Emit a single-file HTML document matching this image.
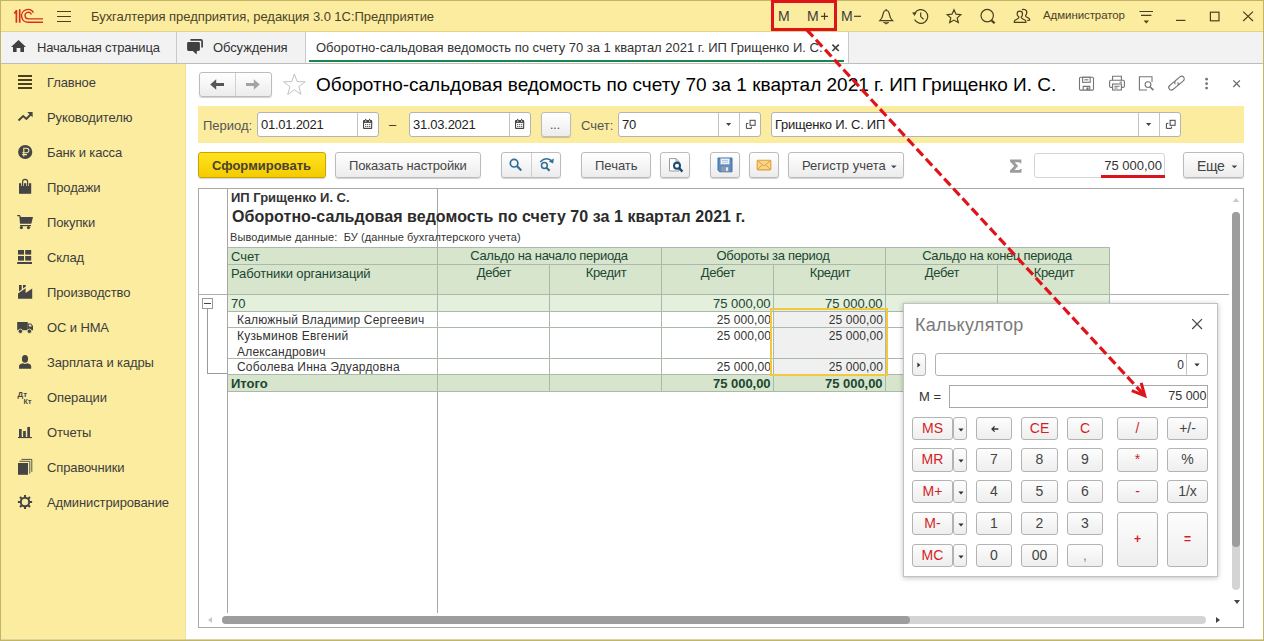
<!DOCTYPE html>
<html lang="ru">
<head>
<meta charset="utf-8">
<title>1C</title>
<style>
html,body{margin:0;padding:0;}
body{width:1264px;height:641px;overflow:hidden;position:relative;background:#fff;font-family:"Liberation Sans",sans-serif;font-size:13px;color:#333;}
.abs{position:absolute;}
.t{position:absolute;white-space:nowrap;line-height:1;}
#titlebar{left:0;top:0;width:1264px;height:32px;background:#fbec9f;}
#tabbar{left:0;top:32px;width:1264px;height:31px;background:#f2f2f2;border-bottom:1px solid #bdbdbd;}
#sidebar{left:0;top:64px;width:185px;height:577px;background:#fbec9f;border-right:1px solid #f0e29c;}
#frame{left:0;top:0;width:1262px;height:639px;border:1px solid #c3b566;pointer-events:none;}
.btn{position:absolute;box-sizing:border-box;border:1px solid #bcbcbc;border-radius:3px;background:linear-gradient(#ffffff,#ececec);box-shadow:0 1px 1px rgba(0,0,0,.18);}
.cb{border-color:#b3b3b3;background:linear-gradient(#fdfdfd,#eeeeee);box-shadow:none;}
.inp{position:absolute;box-sizing:border-box;border:1px solid #b4b4b4;border-radius:3px;background:#fff;}
.menu .t{left:47px;font-size:13px;letter-spacing:-0.12px;color:#3d3d3d;}
</style>
</head>
<body>
<!-- TITLE BAR -->
<div id="titlebar" class="abs"></div>
<div class="t" style="left:91px;top:10px;font-size:13px;letter-spacing:-0.05px;color:#4b4328;">Бухгалтерия предприятия, редакция 3.0 1С:Предприятие</div>

<div class="abs" style="left:0;top:31px;width:1264px;height:1px;background:#e3d386;"></div>
<!-- TAB BAR -->
<div id="tabbar" class="abs"></div>
<div class="abs" style="left:176px;top:32px;width:1px;height:31px;background:#c9c9c9;"></div>
<div class="abs" style="left:305px;top:32px;width:542px;height:31px;background:#fff;border-left:1px solid #c9c9c9;border-right:1px solid #c9c9c9;"></div>
<div class="abs" style="left:309px;top:60px;width:535px;height:2px;background:#19874b;"></div>
<div class="t" style="left:37px;top:41px;font-size:13px;letter-spacing:-0.17px;color:#333;">Начальная страница</div>
<div class="t" style="left:213px;top:41px;font-size:13px;letter-spacing:-0.1px;color:#333;">Обсуждения</div>
<div class="t" style="left:316px;top:41px;font-size:13px;color:#333;">Оборотно-сальдовая ведомость по счету 70 за 1 квартал 2021 г. ИП Грищенко И. С.</div>

<!-- SIDEBAR -->
<div id="sidebar" class="abs"></div>
<div class="menu">
<div class="t" style="top:76px;">Главное</div>
<div class="t" style="top:111px;">Руководителю</div>
<div class="t" style="top:146px;">Банк и касса</div>
<div class="t" style="top:181px;">Продажи</div>
<div class="t" style="top:216px;">Покупки</div>
<div class="t" style="top:251px;">Склад</div>
<div class="t" style="top:286px;">Производство</div>
<div class="t" style="top:321px;">ОС и НМА</div>
<div class="t" style="top:356px;">Зарплата и кадры</div>
<div class="t" style="top:391px;">Операции</div>
<div class="t" style="top:426px;">Отчеты</div>
<div class="t" style="top:461px;">Справочники</div>
<div class="t" style="top:496px;">Администрирование</div>
</div>

<svg class="abs" style="left:0;top:0;" width="186" height="641" viewBox="0 0 186 641">
<!-- logo -->
<g fill="none" stroke="#d8321c" stroke-width="1.4">
<path d="M16.4 10 V22.7 M19.7 9.3 V22.7 M16.6 10.4 L14.3 13.6" stroke-width="1.7"/>
<path d="M33.5 12.6 A6.4 6.4 0 1 0 28.3 22.2 H43"/>
<path d="M31.4 14.4 A3.3 3.3 0 1 0 28.6 18.9 H43"/>
</g>
<!-- hamburger -->
<path d="M57 11.5H71M57 16.5H71M57 21.5H71" stroke="#4a4020" stroke-width="1.1"/>
<!-- home -->
<path d="M18.5 40 L26 47 H24 V52 H20.4 V48 H16.6 V52 H13 V47 H11 Z" fill="#404040"/>
<!-- chat -->
<!-- Glavnoe -->
<g fill="#4a4020"><rect x="18" y="75" width="14" height="2"/><rect x="18" y="79" width="14" height="2"/><rect x="18" y="83" width="14" height="2"/><rect x="18" y="87" width="14" height="2"/></g>
<!-- trend -->
<path d="M18.5 120.5 L23.2 116 L26.4 119 L31 114" fill="none" stroke="#454545" stroke-width="1.9"/>
<path d="M27.2 112 H32.6 V117.2 Z" fill="#454545"/>
<!-- ruble -->
<circle cx="25.2" cy="152" r="7.1" fill="#454545"/>
<path d="M23.8 156.6 V148.2 H26.6 A2.2 2.2 0 0 1 26.6 152.7 H22.3 M22.3 154.6 H27" fill="none" stroke="#fbec9f" stroke-width="1.1"/>
<!-- bag -->
<rect x="19" y="183.2" width="12.2" height="10.6" fill="#454545"/>
<path d="M22.6 186 V181.8 A2.5 2.5 0 0 1 27.6 181.8 V186" fill="none" stroke="#fbec9f" stroke-width="2.6"/>
<path d="M22.6 186 V181.8 A2.5 2.5 0 0 1 27.6 181.8 V186" fill="none" stroke="#454545" stroke-width="1.2"/>
<!-- cart -->
<path d="M17.2 215.6 H19.6 L20.4 217.2" fill="none" stroke="#454545" stroke-width="1.2"/>
<path d="M19.4 217 H33 L31.3 223.8 H20 Z" fill="#454545"/>
<path d="M20 225.6 H31" stroke="#454545" stroke-width="1.2"/>
<circle cx="21.4" cy="227.6" r="1.6" fill="#454545"/><circle cx="28.5" cy="227.6" r="1.6" fill="#454545"/>
<!-- sklad -->
<g fill="#454545"><rect x="18" y="250" width="6" height="4.6"/><rect x="25.2" y="250" width="6" height="4.6"/><rect x="18" y="256" width="6" height="4.6"/><rect x="25.2" y="256" width="6" height="4.6"/><rect x="17.2" y="262" width="14.8" height="2"/></g>
<!-- factory -->
<path d="M18 298.8 V293.6 L25.6 288.2 V293 L32.2 288.6 V298.8 Z" fill="#454545"/>
<path d="M19 285 H21.7 V289.6 L19 291.6 Z M23 285 H25.8 V286.6 L23 288.6 Z" fill="#454545"/>
<!-- truck -->
<path d="M17.2 322 H27.8 V330.2 H17.2 Z" fill="#454545"/>
<path d="M27.8 323.4 H31 L33 326 V330.2 H27.8 Z" fill="#454545"/>
<path d="M28.8 324.4 H30.6 L32 326.4 H28.8 Z" fill="#fbec9f"/>
<circle cx="20.4" cy="331.3" r="2.2" fill="#454545" stroke="#fbec9f" stroke-width="0.8"/><circle cx="29.4" cy="331.3" r="2.2" fill="#454545" stroke="#fbec9f" stroke-width="0.8"/>
<!-- person -->
<ellipse cx="25" cy="358.8" rx="3.1" ry="3.9" fill="#454545"/>
<path d="M19 368.7 V366.5 Q19 364.3 22 363.6 L23 363.2 Q25 364.6 27 363.2 L28 363.6 Q31.2 364.3 31.2 366.5 V368.7 Z" fill="#454545"/>
<!-- dtkt -->
<text x="17.6" y="396.8" font-family="Liberation Sans, sans-serif" font-weight="bold" font-size="7.8" fill="#454545">Дт</text>
<text x="23.6" y="403.8" font-family="Liberation Sans, sans-serif" font-weight="bold" font-size="7.2" fill="#454545">Кт</text>
<!-- reports -->
<g fill="#454545"><rect x="19" y="429" width="2.7" height="8.3"/><rect x="23.1" y="431" width="2.7" height="6.3"/><rect x="27.3" y="427" width="2.7" height="10.3"/><rect x="18" y="437" width="14" height="1.1"/></g>
<!-- books -->
<rect x="18" y="463" width="10" height="11.8" fill="#454545"/>
<path d="M19.5 461.3 H29.8 V473.6 M21.4 459.4 H31.8 V471.8" fill="none" stroke="#454545" stroke-width="0.9"/>
<!-- gear -->
<g transform="translate(25 502)"><circle r="4.2" fill="none" stroke="#454545" stroke-width="2"/>
<g stroke="#454545" stroke-width="2.1"><path d="M0 -4.6V-7.1M0 4.6V7.1M-4.6 0H-7.1M4.6 0H7.1M3.25 3.25L5 5M-3.25 3.25L-5 5M3.25 -3.25L5 -5M-3.25 -3.25L-5 -5"/></g></g>
</svg>
<svg class="abs" style="left:186px;top:32px;" width="30" height="31" viewBox="186 32 30 31">
<path d="M190.4 39.9 H200.8 A1.3 1.3 0 0 1 202.1 41.2 V47.4" fill="none" stroke="#404040" stroke-width="1.7"/>
<path d="M188.5 42.1 H198.5 A1.4 1.4 0 0 1 199.9 43.5 V49.6 A1.4 1.4 0 0 1 198.5 51 H196.9 L196.6 54.5 L192.8 51 H188.5 A1.4 1.4 0 0 1 187.1 49.6 V43.5 A1.4 1.4 0 0 1 188.5 42.1 Z" fill="#404040"/>
</svg>
<!-- titlebar right icons -->
<div class="t" style="left:778px;top:9px;font-size:14px;color:#3d3d3d;">М</div>
<div class="t" style="left:807px;top:9px;font-size:14px;color:#3d3d3d;">М</div>
<div class="t" style="left:841px;top:9px;font-size:14px;color:#3d3d3d;">М</div>
<div class="t" id="adm" style="left:1043px;top:10px;font-size:11.5px;letter-spacing:-0.08px;color:#4b4328;">Администратор</div>
<svg class="abs" style="left:760px;top:0;" width="504" height="32" viewBox="760 0 504 32" fill="none" stroke="#4a4020" stroke-width="1.2">
<path d="M821 16.3H828M824.5 12.8V19.8"/>
<path d="M854 16.3H861"/>
<!-- bell -->
<path d="M879.8 20.6 C881.8 18.8 882.6 17 883 14.4 C883.4 11.6 884.6 10.5 886.2 10.5 C887.8 10.5 889 11.6 889.4 14.4 C889.8 17 890.6 18.8 892.6 20.6 Z M886.2 9.1 V10.5"/>
<path d="M883.4 22.4 H889 L886.2 24.1 Z" fill="#4a4020" stroke-width="0.6"/>
<!-- history -->
<path d="M914.9 13 A6.9 6.9 0 1 1 914.6 19.4"/>
<path d="M912.1 12.6 L916.6 12.2 L914.6 16 Z" fill="#4a4020" stroke="none"/>
<path d="M920.7 12.4 V16.6 L923.6 19.2"/>
<!-- star -->
<path d="M954 9.8 L956 14.2 L960.8 14.7 L957.2 17.9 L958.3 22.6 L954 20.1 L949.7 22.6 L950.8 17.9 L947.2 14.7 L952 14.2 Z"/>
<!-- search -->
<circle cx="987.2" cy="15.6" r="6.2"/>
<path d="M991.4 20.2 L994.6 23.2" stroke-width="2.2"/>
<!-- users -->
<path d="M1019.8 11.2 C1021.6 11.2 1022.5 12.4 1022.5 13.9 C1022.5 15.4 1021.9 16.4 1021.3 17 C1021.1 17.8 1021.5 18.2 1022.4 18.7 L1024.8 20 C1025.8 20.6 1026 21.2 1025.9 22.3 H1014.3 C1014.2 21.2 1014.4 20.6 1015.4 20 L1017.8 18.7 C1018.7 18.2 1019.1 17.8 1018.9 17 C1018.3 16.4 1017.1 15.4 1017.1 13.9 C1017.1 12.4 1018 11.2 1019.8 11.2 Z"/>
<path d="M1022 9.6 C1023 9.2 1024.2 9.2 1025.2 9.8 C1026.6 10.6 1027 12.2 1026.6 13.6 C1026.3 14.6 1025.6 15.2 1025.5 15.8 C1025.5 16.6 1026.2 16.9 1027 17.3 L1028.8 18.2 C1029.6 18.7 1029.8 19.2 1029.7 20.2 L1027.2 20.3"/>
<!-- menu -->
<path d="M1139.4 11.5H1153M1141 15.4H1151.4"/>
<path d="M1143.6 20.6 H1149 L1146.3 23.4 Z" fill="#4a4020" stroke="none"/>
<!-- window -->
<path d="M1176 20.4H1185.4"/>
<rect x="1210.4" y="12.2" width="8.6" height="8.6"/>
<path d="M1243.2 11.6 L1253 21 M1253 11.6 L1243.2 21"/>
</svg>
<!-- tab close -->
<svg class="abs" style="left:830px;top:42px;" width="12" height="12" viewBox="830 42 12 12"><path d="M832.4 44.6 L838.8 51 M838.8 44.6 L832.4 51" stroke="#444" stroke-width="1.7" fill="none"/></svg>
<!-- CONTENT HEADER -->
<div class="btn" style="left:199px;top:72px;width:73px;height:25px;"></div>
<div class="abs" style="left:235px;top:73px;width:1px;height:23px;background:#d0d0d0;"></div>
<div class="t" id="h1" style="left:316px;top:75px;font-size:19px;color:#000;">Оборотно-сальдовая ведомость по счету 70 за 1 квартал 2021 г. ИП Грищенко И. С.</div>

<!-- PERIOD BAND -->
<div class="abs" style="left:198px;top:106px;width:1046px;height:37px;background:#fbec9f;"></div>


<div class="t" style="left:203px;top:119px;font-size:13px;color:#555;">Период:</div>
<div class="inp" style="left:257px;top:112px;width:122px;height:25px;"></div>
<div class="abs" style="left:357px;top:113px;width:1px;height:23px;background:#c4c4c4;"></div>
<div class="t" style="left:261px;top:118px;font-size:13px;letter-spacing:-0.25px;color:#222;">01.01.2021</div>
<div class="t" style="left:389px;top:118px;font-size:13px;color:#333;">–</div>
<div class="inp" style="left:409px;top:112px;width:122px;height:25px;"></div>
<div class="abs" style="left:509px;top:113px;width:1px;height:23px;background:#c4c4c4;"></div>
<div class="t" style="left:413px;top:118px;font-size:13px;letter-spacing:-0.25px;color:#222;">31.03.2021</div>
<div class="btn" style="left:541px;top:112px;width:30px;height:25px;"></div>
<div class="t" style="left:550px;top:119px;font-size:12px;color:#444;">...</div>
<div class="t" style="left:581px;top:119px;font-size:13px;color:#555;">Счет:</div>
<div class="inp" style="left:618px;top:112px;width:143px;height:25px;"></div>
<div class="abs" style="left:718px;top:113px;width:1px;height:23px;background:#c4c4c4;"></div>
<div class="abs" style="left:739px;top:113px;width:1px;height:23px;background:#c4c4c4;"></div>
<div class="t" style="left:622px;top:118px;font-size:13px;letter-spacing:-0.25px;color:#222;">70</div>
<div class="inp" style="left:771px;top:112px;width:410px;height:25px;"></div>
<div class="abs" style="left:1138px;top:113px;width:1px;height:23px;background:#c4c4c4;"></div>
<div class="abs" style="left:1159px;top:113px;width:1px;height:23px;background:#c4c4c4;"></div>
<div class="t" style="left:775px;top:118px;font-size:13px;letter-spacing:-0.25px;color:#222;">Грищенко И. С. ИП</div>

<!-- COMMAND BAR -->
<div class="btn" style="left:198px;top:152px;width:128px;height:26px;border-color:#c9a500;background:linear-gradient(#ffe320,#f5cb00);"></div>
<div class="t" style="left:212px;top:159px;font-size:13px;font-weight:bold;color:#4a4230;">Сформировать</div>
<div class="btn" style="left:335px;top:152px;width:146px;height:26px;"></div>
<div class="t" style="left:349px;top:159px;font-size:13px;letter-spacing:-0.15px;color:#444;">Показать настройки</div>
<div class="btn" style="left:501px;top:152px;width:60px;height:26px;"></div>
<div class="abs" style="left:531px;top:153px;width:1px;height:24px;background:#d0d0d0;"></div>
<div class="btn" style="left:581px;top:152px;width:70px;height:26px;"></div>
<div class="t" style="left:595px;top:159px;font-size:13px;color:#444;">Печать</div>
<div class="btn" style="left:660px;top:152px;width:30px;height:26px;"></div>
<div class="btn" style="left:710px;top:152px;width:30px;height:26px;"></div>
<div class="btn" style="left:749px;top:152px;width:30px;height:26px;"></div>
<div class="btn" style="left:788px;top:152px;width:116px;height:26px;"></div>
<div class="t" style="left:802px;top:159px;font-size:13px;color:#444;">Регистр учета</div>
<div class="inp" style="left:1034px;top:153px;width:131px;height:25px;border-color:#d4d4d4;"></div>
<div class="t" style="left:1062px;width:100px;text-align:right;top:159px;font-size:13px;color:#333;">75 000,00</div>
<div class="abs" style="left:1101px;top:174.5px;width:64px;height:3px;background:#d8141c;"></div>
<div class="btn" style="left:1183px;top:152px;width:61px;height:26px;"></div>
<div class="t" style="left:1197px;top:159px;font-size:14px;letter-spacing:-0.3px;color:#444;">Еще</div>

<svg class="abs" style="left:186px;top:64px;pointer-events:none;" width="1078" height="130" viewBox="186 64 1078 130">
<!-- nav arrows -->
<path d="M210.2 84.5 L216.2 79.2 V83 H224 V86 H216.2 V89.8 Z" fill="#555"/>
<path d="M259.8 84.5 L253.8 79.2 V83 H246 V86 H253.8 V89.8 Z" fill="#a3a3a3"/>
<!-- star -->
<path d="M294.4 74 L297.1 81.6 L305.2 81.8 L298.8 86.7 L301.1 94.4 L294.4 89.8 L287.7 94.4 L290 86.7 L283.6 81.8 L291.7 81.6 Z" fill="#fff" stroke="#c2c2c2" stroke-width="1"/>
<!-- header right icons -->
<g fill="none" stroke="#757575" stroke-width="1.1">
<path d="M1080.6 77.3 H1092.4 A1.1 1.1 0 0 1 1093.5 78.4 V89 A1.1 1.1 0 0 1 1092.4 90.1 H1080.6 A1.1 1.1 0 0 1 1079.5 89 V78.4 A1.1 1.1 0 0 1 1080.6 77.3 Z"/>
<rect x="1082.6" y="77.3" width="7.6" height="5"/><path d="M1084.4 79.8 H1088.4"/>
<path d="M1083.2 90 V86.4 H1089.8 V90"/><rect x="1086.4" y="87.4" width="2.2" height="2.6" fill="#757575" stroke="none"/>
<!-- print -->
<path d="M1112.6 80.2 V76.3 H1121.4 V80.2"/>
<rect x="1109.6" y="80.2" width="14.8" height="7.2" rx="1.4"/>
<rect x="1112.6" y="84" width="8.8" height="6" fill="#fff"/><path d="M1114.4 86.2H1119.6M1114.4 88H1117.6"/>
<path d="M1119.6 82.2H1122"/>
<!-- preview -->
<path d="M1152 82 V76.7 H1139.4 V90 H1147"/>
<circle cx="1148" cy="84.6" r="2.9"/><path d="M1150.2 87 L1153.4 90.2" stroke-width="1.7"/>
<!-- link -->
<g transform="rotate(-40 1176.5 83.2)"><path d="M1176.2 80.6 H1169.8 A2.6 2.6 0 0 0 1169.8 85.8 H1175.4 A2.6 2.6 0 0 0 1178 83.2"/><path d="M1176.8 85.8 H1183.2 A2.6 2.6 0 0 0 1183.2 80.6 H1177.6 A2.6 2.6 0 0 0 1175 83.2"/></g>
</g>
<circle cx="1206.6" cy="79.2" r="1.4" fill="#757575"/><circle cx="1206.6" cy="83.7" r="1.4" fill="#757575"/><circle cx="1206.6" cy="88.1" r="1.4" fill="#757575"/>
<path d="M1233.3 80.4 L1239.9 87 M1239.9 80.4 L1233.3 87" stroke="#666" stroke-width="1.2" fill="none"/>
<!-- period band icons -->
<g class="cal"><rect x="363.0" y="120" width="9.2" height="8.9" rx="1" fill="#444"/><rect x="364.1" y="122.9" width="7" height="4.9" fill="#fff"/><rect x="365.1" y="118.9" width="1.2" height="1.8" fill="#444"/><rect x="369.0" y="118.9" width="1.2" height="1.8" fill="#444"/><rect x="365.1" y="120.6" width="1.2" height="1.1" fill="#fff"/><rect x="369.0" y="120.6" width="1.2" height="1.1" fill="#fff"/><g fill="#444"><circle cx="365.70" cy="124.50" r="0.62"/><circle cx="365.70" cy="126.45" r="0.62"/><circle cx="367.70" cy="124.50" r="0.62"/><circle cx="367.70" cy="126.45" r="0.62"/><circle cx="369.70" cy="124.50" r="0.62"/><circle cx="369.70" cy="126.45" r="0.62"/></g></g><g class="cal"><rect x="515.0" y="120" width="9.2" height="8.9" rx="1" fill="#444"/><rect x="516.1" y="122.9" width="7" height="4.9" fill="#fff"/><rect x="517.1" y="118.9" width="1.2" height="1.8" fill="#444"/><rect x="521.0" y="118.9" width="1.2" height="1.8" fill="#444"/><rect x="517.1" y="120.6" width="1.2" height="1.1" fill="#fff"/><rect x="521.0" y="120.6" width="1.2" height="1.1" fill="#fff"/><g fill="#444"><circle cx="517.70" cy="124.50" r="0.62"/><circle cx="517.70" cy="126.45" r="0.62"/><circle cx="519.70" cy="124.50" r="0.62"/><circle cx="519.70" cy="126.45" r="0.62"/><circle cx="521.70" cy="124.50" r="0.62"/><circle cx="521.70" cy="126.45" r="0.62"/></g></g>
<path d="M726.0 123.0 H731.2 L728.6 126.0 Z" fill="#444"/><path d="M1146.0 123.0 H1151.2 L1148.6 126.0 Z" fill="#444"/>
<g fill="none" stroke="#444" stroke-width="1"><rect x="750.1" y="120.3" width="5" height="5"/><path d="M748.4 123.4 H746.4 V128.4 H751.4 V126.6"/></g><g fill="none" stroke="#444" stroke-width="1"><rect x="1170.1" y="120.3" width="5" height="5"/><path d="M1168.4 123.4 H1166.4 V128.4 H1171.4 V126.6"/></g>
<!-- search icons -->
<g fill="none" stroke="#2f6f98" stroke-width="1.7">
<circle cx="514.1" cy="163.2" r="3.8"/><path d="M516.9 166.1 L521.3 170.6" stroke-width="2.2"/>
<circle cx="544.4" cy="165.5" r="2.9" stroke-width="1.5"/><path d="M546.5 167.7 L549.6 170.8" stroke-width="2"/>
<path d="M540.2 162 Q545.6 156.3 551.6 160.6" stroke-width="1.4"/>
</g>
<path d="M553.8 158.4 L553.2 163.6 L548.8 161.4 Z" fill="#2f6f98"/>
<!-- preview btn -->
<path d="M669.5 158.6 H676 L679 161.6 V171 H669.5 Z" fill="#fff" stroke="#9a9a9a" stroke-width="1"/>
<path d="M676 158.6 V161.6 H679" fill="none" stroke="#9a9a9a" stroke-width="1"/>
<circle cx="677" cy="165.8" r="3" fill="#fff" stroke="#1c4a6e" stroke-width="2"/><path d="M679.3 168.2 L682.4 171.6" stroke="#1c4a6e" stroke-width="2.4"/>
<!-- floppy -->
<path d="M718 158 H732 V171.8 H719.6 L718 170.2 Z" fill="#5d8cc4" stroke="#3f6fa8" stroke-width="1"/>
<rect x="720.6" y="158.6" width="8.8" height="5.6" fill="#f4f7fb" stroke="#9db6d6" stroke-width="0.6"/>
<path d="M722 160.4H728M722 162.2H728" stroke="#9db6d6" stroke-width="0.8"/>
<rect x="721.2" y="166.6" width="7.8" height="5" fill="#8e9aa8"/><rect x="726" y="167.4" width="2" height="3.4" fill="#e8ecf0"/>
<!-- mail -->
<rect x="757.2" y="160.3" width="13.6" height="9.6" rx="0.8" fill="#f7d58e" stroke="#e0a030" stroke-width="1.1"/>
<path d="M757.6 160.8 L764 166 L770.4 160.8 M757.6 169.4 L762.4 164.8 M770.4 169.4 L765.6 164.8" fill="none" stroke="#e0a030" stroke-width="1"/>
<path d="M891.0 165.4 H896.6 L893.8 168.2 Z" fill="#444"/><path d="M1231.6 165.4 H1237.2 L1234.4 168.2 Z" fill="#444"/>
<!-- sigma -->
<path d="M1010 159.4 H1021.3 V163.3 H1019.6 V162.2 H1014.7 L1018.1 166 L1014.5 170.1 H1019.8 V168.9 H1021.5 V172.8 H1010 V170.6 L1014.2 166 L1010 161.6 Z" fill="#9c9c9c"/>
</svg>
<!-- SHEET -->
<div class="abs" id="sheet" style="left:198px;top:188px;width:1044px;height:438px;border:1px solid #a9a9a9;box-sizing:content-box;background:#fff;"></div>
<div class="abs" style="left:228px;top:247px;width:882px;height:47px;background:#d6e5cb;"></div>
<div class="abs" style="left:228px;top:294px;width:882px;height:17px;background:#e4efdc;"></div>
<div class="abs" style="left:228px;top:375px;width:882px;height:16px;background:#d6e5cb;"></div>
<div class="abs" style="left:773px;top:311px;width:113px;height:64px;background:#f1f0f0;"></div>
<div class="abs" style="left:227px;top:189px;width:1px;height:424px;background:#a6a6a6;"></div>
<div class="abs" style="left:437px;top:189px;width:1px;height:424px;background:#a6a6a6;"></div>
<div class="abs" style="left:199px;top:294px;width:1030px;height:1px;background:#b0b0b0;"></div>
<div class="abs" style="left:228px;top:247px;width:882px;height:1px;background:#a9b9ac;"></div>
<div class="abs" style="left:228px;top:264px;width:882px;height:1px;background:#a9b9ac;"></div>
<div class="abs" style="left:228px;top:294px;width:882px;height:1px;background:#a9b9ac;"></div>
<div class="abs" style="left:228px;top:311px;width:882px;height:1px;background:#a9b9ac;"></div>
<div class="abs" style="left:228px;top:327px;width:882px;height:1px;background:#a9b9ac;"></div>
<div class="abs" style="left:228px;top:358px;width:882px;height:1px;background:#a9b9ac;"></div>
<div class="abs" style="left:228px;top:374px;width:882px;height:1px;background:#a9b9ac;"></div>
<div class="abs" style="left:228px;top:391px;width:882px;height:1px;background:#a9b9ac;"></div>
<div class="abs" style="left:661px;top:247px;width:1px;height:144px;background:#a9b9ac;"></div>
<div class="abs" style="left:885px;top:247px;width:1px;height:144px;background:#a9b9ac;"></div>
<div class="abs" style="left:1109px;top:247px;width:1px;height:144px;background:#a9b9ac;"></div>
<div class="abs" style="left:549px;top:264px;width:1px;height:127px;background:#a9b9ac;"></div>
<div class="abs" style="left:773px;top:264px;width:1px;height:127px;background:#a9b9ac;"></div>
<div class="abs" style="left:997px;top:264px;width:1px;height:127px;background:#a9b9ac;"></div>
<div class="abs" style="left:437px;top:247px;width:1px;height:144px;background:#a9b9ac;"></div>
<div class="t" style="left:231px;top:191px;font-size:13px;font-weight:bold;color:#333;">ИП Грищенко И. С.</div>
<div class="t" id="rt" style="left:232px;top:209px;font-size:16px;font-weight:bold;letter-spacing:0.05px;color:#2b2b2b;">Оборотно-сальдовая ведомость по счету 70 за 1 квартал 2021 г.</div>
<div class="t" id="vd" style="left:230px;top:232px;font-size:11px;letter-spacing:0.09px;color:#333;">Выводимые данные:&nbsp; БУ (данные бухгалтерского учета)</div>
<div class="t" style="left:231px;top:250px;font-size:13px;color:#1c4634;">Счет</div>
<div class="t" style="left:231px;top:267px;font-size:13px;letter-spacing:-0.15px;color:#1c4634;">Работники организаций</div>
<div class="t" style="left:437px;width:224px;text-align:center;top:249px;font-size:13px;letter-spacing:-0.3px;color:#1c4634;">Сальдо на начало периода</div>
<div class="t" style="left:661px;width:224px;text-align:center;top:249px;font-size:13px;letter-spacing:-0.3px;color:#1c4634;">Обороты за период</div>
<div class="t" style="left:885px;width:224px;text-align:center;top:249px;font-size:13px;letter-spacing:-0.3px;color:#1c4634;">Сальдо на конец периода</div>
<div class="t" style="left:438px;width:112px;text-align:center;top:266px;font-size:13px;letter-spacing:-0.3px;color:#1c4634;">Дебет</div>
<div class="t" style="left:550px;width:112px;text-align:center;top:266px;font-size:13px;letter-spacing:-0.3px;color:#1c4634;">Кредит</div>
<div class="t" style="left:662px;width:112px;text-align:center;top:266px;font-size:13px;letter-spacing:-0.3px;color:#1c4634;">Дебет</div>
<div class="t" style="left:774px;width:112px;text-align:center;top:266px;font-size:13px;letter-spacing:-0.3px;color:#1c4634;">Кредит</div>
<div class="t" style="left:886px;width:112px;text-align:center;top:266px;font-size:13px;letter-spacing:-0.3px;color:#1c4634;">Дебет</div>
<div class="t" style="left:998px;width:112px;text-align:center;top:266px;font-size:13px;letter-spacing:-0.3px;color:#1c4634;">Кредит</div>
<div class="t" style="left:231px;top:297px;font-size:13px;color:#1c4634;">70</div>
<div class="t" style="left:662px;width:108.5px;text-align:right;top:297px;font-size:13px;letter-spacing:-0.05px;color:#1c4634;">75 000,00</div>
<div class="t" style="left:774px;width:108.5px;text-align:right;top:297px;font-size:13px;letter-spacing:-0.05px;color:#1c4634;">75 000,00</div>
<div class="t" style="left:237px;top:314px;font-size:12px;letter-spacing:0.2px;color:#333;">Калюжный Владимир Сергеевич</div>
<div class="t" style="left:662px;width:109px;text-align:right;top:314px;font-size:12px;letter-spacing:0.1px;color:#333;">25 000,00</div>
<div class="t" style="left:774px;width:109px;text-align:right;top:314px;font-size:12px;letter-spacing:0.1px;color:#333;">25 000,00</div>
<div class="t" style="left:237px;top:330px;font-size:12px;letter-spacing:0.2px;color:#333;">Кузьминов Евгений</div>
<div class="t" style="left:237px;top:346px;font-size:12px;letter-spacing:0.2px;color:#333;">Александрович</div>
<div class="t" style="left:662px;width:109px;text-align:right;top:330px;font-size:12px;letter-spacing:0.1px;color:#333;">25 000,00</div>
<div class="t" style="left:774px;width:109px;text-align:right;top:330px;font-size:12px;letter-spacing:0.1px;color:#333;">25 000,00</div>
<div class="t" style="left:237px;top:361px;font-size:12px;letter-spacing:0.2px;color:#333;">Соболева Инна Эдуардовна</div>
<div class="t" style="left:662px;width:109px;text-align:right;top:361px;font-size:12px;letter-spacing:0.1px;color:#333;">25 000,00</div>
<div class="t" style="left:774px;width:109px;text-align:right;top:361px;font-size:12px;letter-spacing:0.1px;color:#333;">25 000,00</div>
<div class="t" style="left:231px;top:377px;font-size:13px;font-weight:bold;color:#1c4634;">Итого</div>
<div class="t" style="left:662px;width:108.5px;text-align:right;top:377px;font-size:13px;letter-spacing:-0.05px;color:#1c4634;font-weight:bold;">75 000,00</div>
<div class="t" style="left:774px;width:108.5px;text-align:right;top:377px;font-size:13px;letter-spacing:-0.05px;color:#1c4634;font-weight:bold;">75 000,00</div>
<div class="abs" style="left:770.3px;top:308.2px;width:113.5px;height:64.3px;border:2.4px solid #f3c73f;"></div>
<div class="abs" style="left:202px;top:298px;width:9px;height:9px;border:1px solid #9a9a9a;background:#fff;box-sizing:content-box;"></div>
<div class="abs" style="left:204px;top:303px;width:7px;height:1px;background:#444;"></div>
<div class="abs" style="left:207px;top:309px;width:1px;height:65px;background:#9a9a9a;"></div>
<div class="abs" style="left:207px;top:373px;width:20px;height:1px;background:#9a9a9a;"></div>
<div class="abs" style="left:1232px;top:212px;width:8px;height:378px;border-radius:4px;background:#d4d4d4;"></div>
<div class="abs" style="left:1232px;top:212px;width:8px;height:335px;border-radius:4px;background:#9d9d9d;"></div>
<div class="abs" style="left:1233px;top:198px;width:0;height:0;border-left:3px solid transparent;border-right:3px solid transparent;border-bottom:4px solid #c8c8c8;"></div>
<div class="abs" style="left:1233.5px;top:599.5px;width:0;height:0;border-left:3px solid transparent;border-right:3px solid transparent;border-top:4px solid #444;"></div>
<div class="abs" style="left:222px;top:616px;width:984px;height:8px;border-radius:4px;background:#d4d4d4;"></div>
<div class="abs" style="left:222px;top:616px;width:688px;height:8px;border-radius:4px;background:#9d9d9d;"></div>
<div class="abs" style="left:208px;top:617px;width:0;height:0;border-top:3px solid transparent;border-bottom:3px solid transparent;border-right:4px solid #c8c8c8;"></div>
<div class="abs" style="left:1216px;top:617px;width:0;height:0;border-top:3px solid transparent;border-bottom:3px solid transparent;border-left:4px solid #444;"></div>
<div class="abs" id="calc" style="left:903px;top:303px;width:313px;height:272px;border:1px solid #c2c2c2;background:#fff;box-shadow:0 1px 5px rgba(0,0,0,.25);"></div>
<div class="t" id="ct" style="left:915px;top:316px;font-size:18px;letter-spacing:0.3px;color:#7a7a7a;">Калькулятор</div>
<svg class="abs" style="left:1191px;top:318px;" width="12" height="12" viewBox="0 0 12 12"><path d="M1.2 1.2L11 11M11 1.2L1.2 11" stroke="#444" stroke-width="1.2" fill="none"/></svg>
<div class="btn cb" style="left:912px;top:353px;width:14px;height:23px;"></div>
<svg class="abs" style="left:917px;top:362px;" width="4" height="6" viewBox="0 0 4 6"><path d="M0.4 0.4V5.6L3.4 3Z" fill="#333"/></svg>
<div class="inp" style="left:935px;top:353px;width:273px;height:23px;border-color:#b2b2b2;"></div>
<div class="abs" style="left:1186px;top:354px;width:1px;height:21px;background:#c4c4c4;"></div>
<div class="t" style="left:1085px;width:99px;text-align:right;top:359px;font-size:12px;color:#333;">0</div>
<svg class="abs" style="left:1194px;top:363px;" width="6" height="4" viewBox="0 0 6 4"><path d="M0.4 0.4H5.6L3 3.4Z" fill="#333"/></svg>
<div class="t" style="left:919px;top:390px;font-size:13px;color:#333;">М =</div>
<div class="inp" style="left:949px;top:385px;width:259px;height:23px;border-radius:0;border-color:#a8a8a8;"></div>
<div class="t" style="left:1105px;width:101.5px;text-align:right;top:390px;font-size:12.5px;color:#333;">75 000</div>
<div class="btn cb" style="left:912px;top:417px;width:41px;height:23px;"></div>
<div class="btn cb" style="left:952.5px;top:417px;width:14.5px;height:23px;"></div>
<svg class="abs" style="left:957.5px;top:427.5px;" width="6" height="4" viewBox="0 0 6 4"><path d="M0.4 0.4H5.6L3 3.4Z" fill="#333"/></svg>
<div class="t" style="left:912px;width:41px;text-align:center;top:420.5px;font-size:14px;color:#d21f26;">MS</div>
<div class="btn cb" style="left:912px;top:448px;width:41px;height:24px;"></div>
<div class="btn cb" style="left:952.5px;top:448px;width:14.5px;height:24px;"></div>
<svg class="abs" style="left:957.5px;top:459.0px;" width="6" height="4" viewBox="0 0 6 4"><path d="M0.4 0.4H5.6L3 3.4Z" fill="#333"/></svg>
<div class="t" style="left:912px;width:41px;text-align:center;top:452.0px;font-size:14px;color:#d21f26;">MR</div>
<div class="btn cb" style="left:912px;top:480px;width:41px;height:23px;"></div>
<div class="btn cb" style="left:952.5px;top:480px;width:14.5px;height:23px;"></div>
<svg class="abs" style="left:957.5px;top:490.5px;" width="6" height="4" viewBox="0 0 6 4"><path d="M0.4 0.4H5.6L3 3.4Z" fill="#333"/></svg>
<div class="t" style="left:912px;width:41px;text-align:center;top:483.5px;font-size:14px;color:#d21f26;">M+</div>
<div class="btn cb" style="left:912px;top:512px;width:41px;height:23px;"></div>
<div class="btn cb" style="left:952.5px;top:512px;width:14.5px;height:23px;"></div>
<svg class="abs" style="left:957.5px;top:522.5px;" width="6" height="4" viewBox="0 0 6 4"><path d="M0.4 0.4H5.6L3 3.4Z" fill="#333"/></svg>
<div class="t" style="left:912px;width:41px;text-align:center;top:515.5px;font-size:14px;color:#d21f26;">M-</div>
<div class="btn cb" style="left:912px;top:544px;width:41px;height:23px;"></div>
<div class="btn cb" style="left:952.5px;top:544px;width:14.5px;height:23px;"></div>
<svg class="abs" style="left:957.5px;top:554.5px;" width="6" height="4" viewBox="0 0 6 4"><path d="M0.4 0.4H5.6L3 3.4Z" fill="#333"/></svg>
<div class="t" style="left:912px;width:41px;text-align:center;top:547.5px;font-size:14px;color:#d21f26;">MC</div>
<div class="btn cb" style="left:976px;top:417px;width:36px;height:23px;"></div>
<svg class="abs" style="left:991px;top:425px;" width="8" height="8" viewBox="0 0 8 8"><path d="M7.4 4H1.2M3.6 1.4L1 4L3.6 6.6" stroke="#333" stroke-width="1.3" fill="none"/></svg>
<div class="btn cb" style="left:1021px;top:417px;width:37px;height:23px;"></div>
<div class="t" style="left:1021px;width:37px;text-align:center;top:420.5px;font-size:14px;color:#d21f26;">CE</div>
<div class="btn cb" style="left:1067px;top:417px;width:36px;height:23px;"></div>
<div class="t" style="left:1067px;width:36px;text-align:center;top:420.5px;font-size:14px;color:#d21f26;">C</div>
<div class="btn cb" style="left:976px;top:448px;width:36px;height:24px;"></div>
<div class="t" style="left:976px;width:36px;text-align:center;top:452.0px;font-size:14px;color:#444;">7</div>
<div class="btn cb" style="left:1021px;top:448px;width:37px;height:24px;"></div>
<div class="t" style="left:1021px;width:37px;text-align:center;top:452.0px;font-size:14px;color:#444;">8</div>
<div class="btn cb" style="left:1067px;top:448px;width:36px;height:24px;"></div>
<div class="t" style="left:1067px;width:36px;text-align:center;top:452.0px;font-size:14px;color:#444;">9</div>
<div class="btn cb" style="left:976px;top:480px;width:36px;height:23px;"></div>
<div class="t" style="left:976px;width:36px;text-align:center;top:483.5px;font-size:14px;color:#444;">4</div>
<div class="btn cb" style="left:1021px;top:480px;width:37px;height:23px;"></div>
<div class="t" style="left:1021px;width:37px;text-align:center;top:483.5px;font-size:14px;color:#444;">5</div>
<div class="btn cb" style="left:1067px;top:480px;width:36px;height:23px;"></div>
<div class="t" style="left:1067px;width:36px;text-align:center;top:483.5px;font-size:14px;color:#444;">6</div>
<div class="btn cb" style="left:976px;top:512px;width:36px;height:23px;"></div>
<div class="t" style="left:976px;width:36px;text-align:center;top:515.5px;font-size:14px;color:#444;">1</div>
<div class="btn cb" style="left:1021px;top:512px;width:37px;height:23px;"></div>
<div class="t" style="left:1021px;width:37px;text-align:center;top:515.5px;font-size:14px;color:#444;">2</div>
<div class="btn cb" style="left:1067px;top:512px;width:36px;height:23px;"></div>
<div class="t" style="left:1067px;width:36px;text-align:center;top:515.5px;font-size:14px;color:#444;">3</div>
<div class="btn cb" style="left:976px;top:544px;width:36px;height:23px;"></div>
<div class="t" style="left:976px;width:36px;text-align:center;top:547.5px;font-size:14px;color:#444;">0</div>
<div class="btn cb" style="left:1021px;top:544px;width:37px;height:23px;"></div>
<div class="t" style="left:1021px;width:37px;text-align:center;top:547.5px;font-size:14px;color:#444;">00</div>
<div class="btn cb" style="left:1067px;top:544px;width:36px;height:23px;"></div>
<div class="t" style="left:1067px;width:36px;text-align:center;top:547.5px;font-size:14px;color:#888;">,</div>
<div class="btn cb" style="left:1117px;top:417px;width:41px;height:23px;"></div>
<div class="t" style="left:1117px;width:41px;text-align:center;top:420.5px;font-size:14px;color:#d21f26;">/</div>
<div class="btn cb" style="left:1167px;top:417px;width:41px;height:23px;"></div>
<div class="t" style="left:1167px;width:41px;text-align:center;top:420.5px;font-size:14px;color:#444;">+/-</div>
<div class="btn cb" style="left:1117px;top:448px;width:41px;height:24px;"></div>
<div class="t" style="left:1117px;width:41px;text-align:center;top:452.0px;font-size:14px;color:#d21f26;">*</div>
<div class="btn cb" style="left:1167px;top:448px;width:41px;height:24px;"></div>
<div class="t" style="left:1167px;width:41px;text-align:center;top:452.0px;font-size:14px;color:#444;">%</div>
<div class="btn cb" style="left:1117px;top:480px;width:41px;height:23px;"></div>
<div class="t" style="left:1117px;width:41px;text-align:center;top:483.5px;font-size:14px;color:#d21f26;">-</div>
<div class="btn cb" style="left:1167px;top:480px;width:41px;height:23px;"></div>
<div class="t" style="left:1167px;width:41px;text-align:center;top:483.5px;font-size:14px;color:#444;">1/x</div>
<div class="btn cb" style="left:1117px;top:512px;width:41px;height:55px;"></div>
<div class="t" style="left:1117px;width:41px;text-align:center;top:533px;font-size:12px;font-weight:bold;color:#d21f26;">+</div>
<div class="btn cb" style="left:1167px;top:512px;width:41px;height:55px;"></div>
<div class="t" style="left:1167px;width:41px;text-align:center;top:533px;font-size:12px;font-weight:bold;color:#d21f26;">=</div>
<div id="frame" class="abs"></div><div class="abs" style="left:1px;top:639px;width:1262px;height:1px;background:#ddd4a6;"></div>
<div class="abs" style="left:771px;top:0px;width:60px;height:25px;border:3px solid #e0131a;"></div>
<svg class="abs" style="left:0;top:0;pointer-events:none;" width="1264" height="641" viewBox="0 0 1264 641">
<line x1="806.8" y1="29.8" x2="1144" y2="394.9" stroke="#e0131a" stroke-width="3.2" stroke-dasharray="9.3 4.2"/>
<path d="M1131.8 390.6 L1144.8 395.8 L1141.2 382.8" stroke="#e0131a" stroke-width="3" fill="none"/>
</svg>

</body>
</html>
